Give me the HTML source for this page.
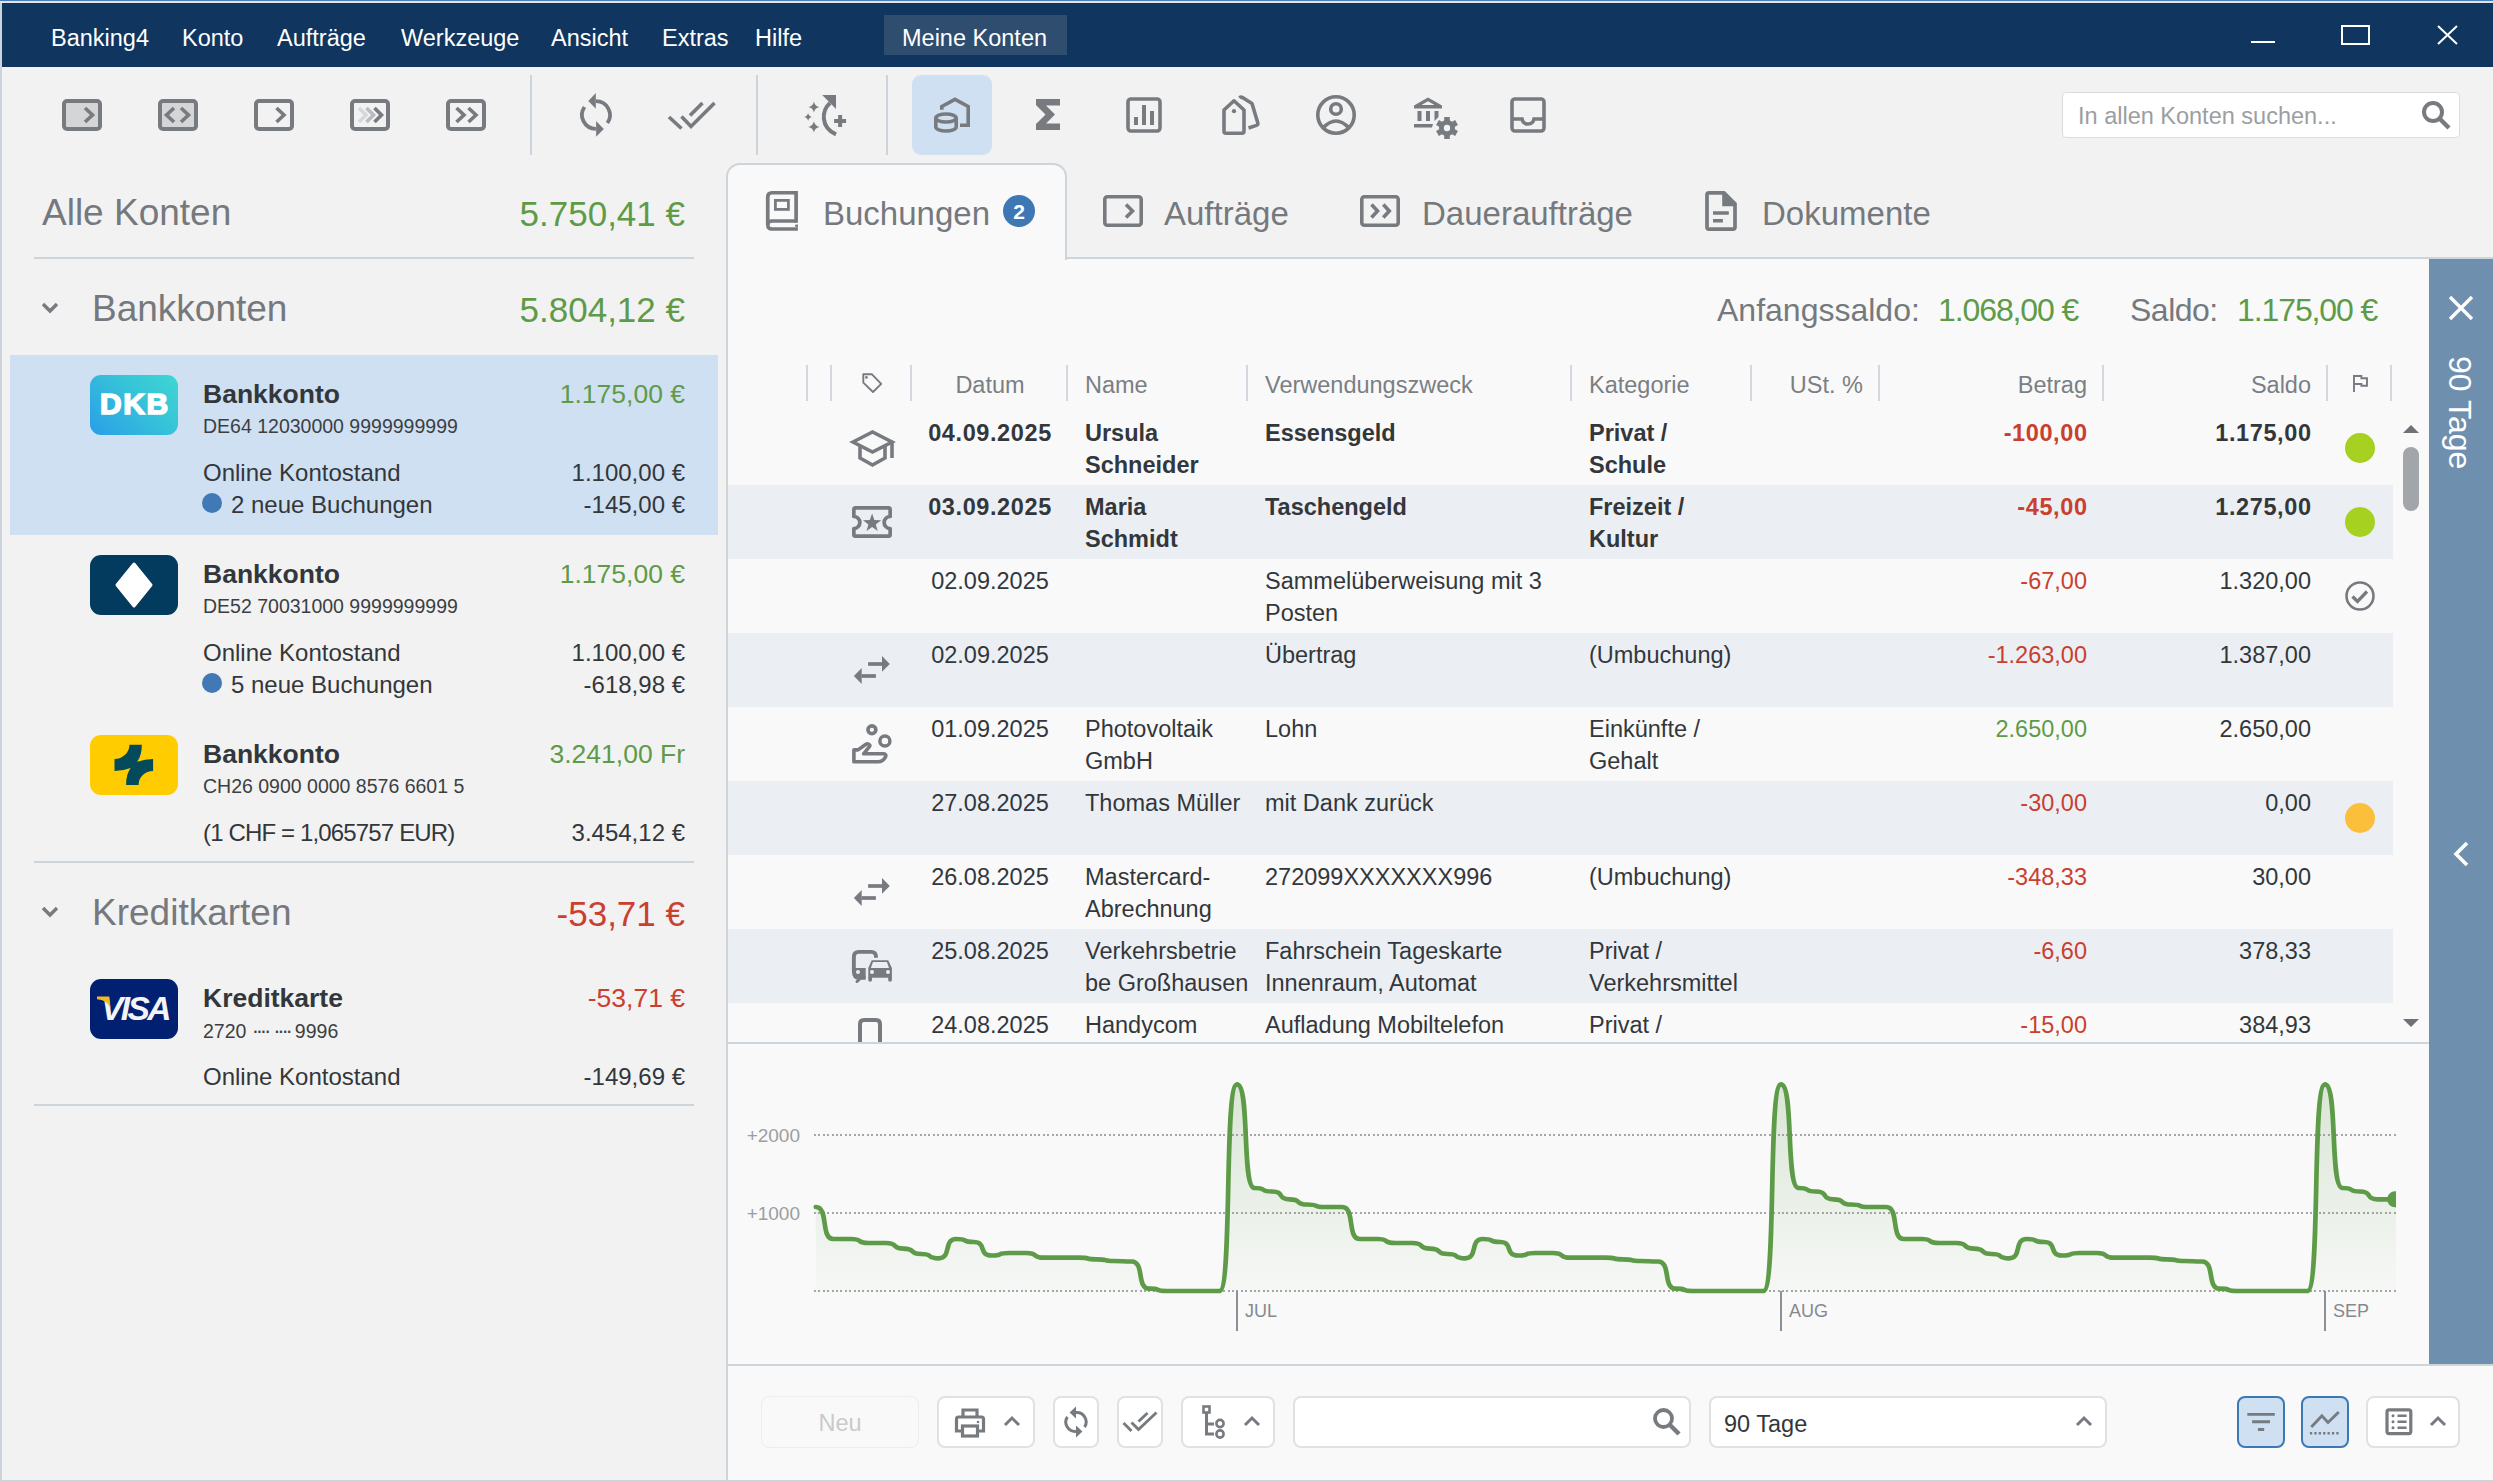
<!DOCTYPE html><html><head><meta charset="utf-8"><title>Banking4</title><style>
html,body{margin:0;padding:0;}
body{width:2494px;height:1482px;overflow:hidden;position:relative;background:#f2f2f2;font-family:"Liberation Sans", sans-serif;}
.t{position:absolute;white-space:nowrap;}
.r{position:absolute;}
.s{position:absolute;overflow:visible;}
</style></head><body>
<div class="r" style="left:0px;top:0px;width:2px;height:1482px;background:#ccd3db;"></div>
<div class="r" style="left:0px;top:0px;width:2494px;height:1px;background:#4b7bb9;"></div>
<div class="r" style="left:0px;top:1px;width:2494px;height:2px;background:#e2e3e5;"></div>
<div class="r" style="left:2493px;top:0px;width:1px;height:1482px;background:#ccd3db;"></div>
<div class="r" style="left:0px;top:1480px;width:2494px;height:2px;background:#ccd3db;"></div>
<div class="r" style="left:2px;top:3px;width:2491px;height:64px;background:#10355e;"></div>
<div class="t" style="left:51px;top:22.86px;font-size:23.5px;line-height:31px;color:#ffffff;">Banking4</div>
<div class="t" style="left:182px;top:22.86px;font-size:23.5px;line-height:31px;color:#ffffff;">Konto</div>
<div class="t" style="left:277px;top:22.86px;font-size:23.5px;line-height:31px;color:#ffffff;">Aufträge</div>
<div class="t" style="left:401px;top:22.86px;font-size:23.5px;line-height:31px;color:#ffffff;">Werkzeuge</div>
<div class="t" style="left:551px;top:22.86px;font-size:23.5px;line-height:31px;color:#ffffff;">Ansicht</div>
<div class="t" style="left:662px;top:22.86px;font-size:23.5px;line-height:31px;color:#ffffff;">Extras</div>
<div class="t" style="left:755px;top:22.86px;font-size:23.5px;line-height:31px;color:#ffffff;">Hilfe</div>
<div class="r" style="left:884px;top:15px;width:183px;height:40px;background:#2e4d6f;"></div>
<div class="t" style="left:902px;top:22.86px;font-size:23.5px;line-height:31px;color:#ffffff;">Meine Konten</div>
<div class="r" style="left:2251px;top:41px;width:24px;height:2px;background:#ffffff;"></div>
<svg class="s" style="left:2340px;top:24px;" width="31" height="22" viewBox="0 0 31 22"><rect x="2" y="2" width="27" height="18" fill="none" stroke="#fff" stroke-width="2"/></svg>
<svg class="s" style="left:2436px;top:24px;" width="23" height="22" viewBox="0 0 23 22"><path d="M2 2 L21 20 M21 2 L2 20" stroke="#fff" stroke-width="2" fill="none"/></svg>
<svg class="s" style="left:62px;top:99px;" width="40" height="32" viewBox="0 0 40 32"><rect x="2" y="2" width="36" height="28" rx="3" fill="#d4d5d7" stroke="#777b80" stroke-width="4"/><polyline points="23,9 30.5,16.0 23,23" fill="none" stroke="#777b80" stroke-width="3.6"/></svg>
<svg class="s" style="left:158px;top:99px;" width="40" height="32" viewBox="0 0 40 32"><rect x="2" y="2" width="36" height="28" rx="3" fill="#d4d5d7" stroke="#777b80" stroke-width="4"/><polyline points="16,9 8.5,16.0 16,23" fill="none" stroke="#777b80" stroke-width="3.6"/><polyline points="23,9 30.5,16.0 23,23" fill="none" stroke="#777b80" stroke-width="3.6"/></svg>
<svg class="s" style="left:254px;top:99px;" width="40" height="32" viewBox="0 0 40 32"><rect x="2" y="2" width="36" height="28" rx="3" fill="none" stroke="#777b80" stroke-width="4"/><polyline points="22.5,9 30,16.0 22.5,23" fill="none" stroke="#777b80" stroke-width="3.6"/></svg>
<svg class="s" style="left:350px;top:99px;" width="40" height="32" viewBox="0 0 40 32"><rect x="2" y="2" width="36" height="28" rx="3" fill="none" stroke="#777b80" stroke-width="4"/><polyline points="9,9 16,16.0 9,23" fill="none" stroke="#d6d7d9" stroke-width="3.6"/><polyline points="16.5,9 23.5,16.0 16.5,23" fill="none" stroke="#b9bbbe" stroke-width="3.6"/><polyline points="24.5,9 31.5,16.0 24.5,23" fill="none" stroke="#777b80" stroke-width="3.6"/></svg>
<svg class="s" style="left:446px;top:99px;" width="40" height="32" viewBox="0 0 40 32"><rect x="2" y="2" width="36" height="28" rx="3" fill="none" stroke="#777b80" stroke-width="4"/><polyline points="10.5,9 18,16.0 10.5,23" fill="none" stroke="#777b80" stroke-width="3.6"/><polyline points="22.5,9 30,16.0 22.5,23" fill="none" stroke="#777b80" stroke-width="3.6"/></svg>
<div class="r" style="left:530px;top:75px;width:2px;height:80px;background:#cdd3da;"></div>
<div class="r" style="left:756px;top:75px;width:2px;height:80px;background:#cdd3da;"></div>
<div class="r" style="left:886px;top:75px;width:2px;height:80px;background:#cdd3da;"></div>
<svg class="s" style="left:575px;top:88px;" width="45" height="54" viewBox="0 0 45 54"><path d="M20.95 13.05 A13.95 13.95 0 0 1 32.4 35" fill="none" stroke="#777b80" stroke-width="3.8"/>
<path d="M20.95 40.95 A13.95 13.95 0 0 1 9.5 19" fill="none" stroke="#777b80" stroke-width="3.8"/>
<path d="M13.3 12.9 L20.8 5.1 L20.8 20.8 Z" fill="#777b80"/><path d="M28.8 41 L21.1 33.1 L21.1 48.8 Z" fill="#777b80"/></svg>
<svg class="s" style="left:668px;top:100px;" width="50" height="32" viewBox="0 0 50 32"><path d="M1 17 L13.5 28.5 M13.5 16.5 L23 26.5 L46.5 3 M22 15.5 L34.5 3" fill="none" stroke="#777b80" stroke-width="3.6"/></svg>
<svg class="s" style="left:800px;top:92px;" width="50" height="46" viewBox="0 0 50 46"><path d="M13.9 9.4 Q14.796 14.104 19.5 15 Q14.796 15.896 13.9 20.6 Q13.004000000000001 15.896 8.3 15 Q13.004000000000001 14.104 13.9 9.4 Z" fill="#777b80"/><path d="M8.1 21.1 Q8.724 24.376 12.0 25 Q8.724 25.624 8.1 28.9 Q7.476 25.624 4.199999999999999 25 Q7.476 24.376 8.1 21.1 Z" fill="#777b80"/><path d="M13.9 29.299999999999997 Q14.796 34.004 19.5 34.9 Q14.796 35.796 13.9 40.5 Q13.004000000000001 35.796 8.3 34.9 Q13.004000000000001 34.004 13.9 29.299999999999997 Z" fill="#777b80"/><path d="M30 11 C25 15.5 23.3 21 23.9 27 C24.7 34 29.5 39.5 36 42.3" fill="none" stroke="#777b80" stroke-width="4"/><path d="M22.2 3 L36 3 L36 16.9 Z" fill="#777b80"/><path d="M34.1 28.9 L46.1 28.9 M40.1 22.9 L40.1 34.9" stroke="#777b80" stroke-width="4" fill="none"/></svg>
<div class="r" style="left:912px;top:75px;width:80px;height:80px;background:#cfe0f2;border-radius:9px;"></div>
<svg class="s" style="left:930px;top:94px;" width="44" height="42" viewBox="0 0 44 42"><path d="M11.8 15.8 L11.8 12.5 L25 5.3 L38.2 12.5 L38.2 31.2 L30 31.2" fill="none" stroke="#777b80" stroke-width="3.6"/>
<ellipse cx="16" cy="24" rx="10.2" ry="4" fill="none" stroke="#777b80" stroke-width="3.6"/>
<path d="M5.8 24 L5.8 33 A10.2 4 0 0 0 26.2 33 L26.2 24" fill="none" stroke="#777b80" stroke-width="3.6"/></svg>
<svg class="s" style="left:1034px;top:97px;" width="28" height="36" viewBox="0 0 28 36"><path d="M2 2 L26 2 L26 8.5 L12 8.5 L21 17.5 L12 26.5 L26 26.5 L26 33 L2 33 L2 27 L11.5 17.5 L2 8 Z" fill="#777b80"/></svg>
<svg class="s" style="left:1124px;top:95px;" width="40" height="40" viewBox="0 0 40 40"><rect x="4" y="4" width="32" height="32" rx="3" fill="none" stroke="#777b80" stroke-width="3.6"/><path d="M12 30 L12 22 M20 30 L20 10 M28 30 L28 16" stroke="#777b80" stroke-width="4" fill="none"/></svg>
<svg class="s" style="left:1220px;top:93px;" width="42" height="44" viewBox="0 0 42 44"><path d="M4 38.2 L4 17 L14 7.8 L24 17 L24 38.2 Q24 40.2 22 40.2 L6 40.2 Q4 40.2 4 38.2 Z" fill="none" stroke="#777b80" stroke-width="3.6" stroke-linejoin="round"/>
<circle cx="14" cy="18.2" r="2.1" fill="#777b80"/>
<path d="M19.5 5 Q20.8 3.6 22.5 4.6 L32 10.6 L37.8 30 Q38.2 31.8 36.5 32.4 L28.5 35" fill="none" stroke="#777b80" stroke-width="3.6" stroke-linejoin="round"/></svg>
<svg class="s" style="left:1314px;top:93px;" width="44" height="44" viewBox="0 0 44 44"><circle cx="22" cy="22" r="18.2" fill="none" stroke="#777b80" stroke-width="3.6"/>
<circle cx="22" cy="16" r="5.3" fill="none" stroke="#777b80" stroke-width="3.6"/>
<path d="M9 35 Q22 21 35 35" fill="none" stroke="#777b80" stroke-width="3.6"/></svg>
<svg class="s" style="left:1412px;top:95px;" width="48" height="46" viewBox="0 0 48 46"><path d="M2 10.5 L16 2.5 L30 10.5 L30 13.5 L2 13.5 Z" fill="#777b80"/><path d="M9.5 10 L16 6.3 L22.5 10 Z" fill="#f2f2f2"/>
<rect x="5.5" y="16" width="4" height="10" fill="#777b80"/><rect x="14" y="16" width="4" height="10" fill="#777b80"/><path d="M22.5 16 L26.5 16 L26.5 22 L22.5 26 Z" fill="#777b80"/>
<path d="M2 29 L21 29 L20 32.5 L2 32.5 Z" fill="#777b80"/>
<g transform="translate(35,33)"><circle r="8" fill="#777b80"/><rect x="-2.8" y="-11" width="5.6" height="6" fill="#777b80" transform="rotate(0)"/><rect x="-2.8" y="-11" width="5.6" height="6" fill="#777b80" transform="rotate(60)"/><rect x="-2.8" y="-11" width="5.6" height="6" fill="#777b80" transform="rotate(120)"/><rect x="-2.8" y="-11" width="5.6" height="6" fill="#777b80" transform="rotate(180)"/><rect x="-2.8" y="-11" width="5.6" height="6" fill="#777b80" transform="rotate(240)"/><rect x="-2.8" y="-11" width="5.6" height="6" fill="#777b80" transform="rotate(300)"/><circle r="3.2" fill="#f2f2f2"/></g></svg>
<svg class="s" style="left:1508px;top:95px;" width="40" height="40" viewBox="0 0 40 40"><rect x="4" y="4" width="32" height="32" rx="3" fill="none" stroke="#777b80" stroke-width="3.6"/>
<path d="M4 24 L14 24 Q15 29 20 29 Q25 29 26 24 L36 24" fill="none" stroke="#777b80" stroke-width="3.6"/></svg>
<div class="r" style="left:2062px;top:92px;width:398px;height:46px;background:#ffffff;box-sizing:border-box;border:1px solid #dcdcdc;border-radius:4px;"></div>
<div class="t" style="left:2078px;top:101.36px;font-size:23.5px;line-height:31px;color:#9b9ea2;">In allen Konten suchen...</div>
<svg class="s" style="left:2420px;top:99px;" width="34" height="34" viewBox="0 0 34 34"><circle cx="13" cy="13" r="9" fill="none" stroke="#777b80" stroke-width="4"/><path d="M19.5 19.5 L29 29" stroke="#777b80" stroke-width="4.5" stroke-linecap="butt"/></svg>
<div class="t" style="left:42px;top:189.18px;font-size:37px;line-height:48px;color:#75797e;">Alle Konten</div>
<div class="t" style="left:-515px;width:1200px;text-align:right;top:190.87px;font-size:35px;line-height:46px;color:#5e9b48;">5.750,41 €</div>
<div class="r" style="left:34px;top:257px;width:660px;height:2px;background:#cdd4da;"></div>
<svg class="s" style="left:41px;top:302px;" width="18" height="12" viewBox="0 0 18 12"><polyline points="2,2 9,9 16,2" fill="none" stroke="#777b80" stroke-width="3.4"/></svg>
<div class="t" style="left:92px;top:285.18px;font-size:37px;line-height:48px;color:#75797e;">Bankkonten</div>
<div class="t" style="left:-515px;width:1200px;text-align:right;top:286.87px;font-size:35px;line-height:46px;color:#5e9b48;">5.804,12 €</div>
<div class="r" style="left:10px;top:355px;width:708px;height:180px;background:#cfe0f2;"></div>
<div class="r" style="left:90px;top:375px;width:88px;height:60px;border-radius:11px;overflow:hidden;background:linear-gradient(45deg,#2b9ee8 0%,#36c4d8 60%,#3fd6d2 100%);"><div class="t" style="left:1px;top:11px;width:88px;text-align:center;font-size:30px;line-height:36px;font-weight:700;color:#fff;letter-spacing:1.6px;-webkit-text-stroke:1.6px #fff;">DKB</div></div>
<div class="t" style="left:203px;top:376.82px;font-size:26.5px;line-height:34px;color:#33373b;font-weight:700;">Bankkonto</div>
<div class="t" style="left:-515px;width:1200px;text-align:right;top:376.82px;font-size:26.5px;line-height:34px;color:#5e9b48;">1.175,00 €</div>
<div class="t" style="left:203px;top:413.74px;font-size:19.5px;line-height:25px;color:#3b3f43;">DE64 12030000 9999999999</div>
<div class="t" style="left:203px;top:457.18px;font-size:24px;line-height:31px;color:#33373b;">Online Kontostand</div>
<div class="t" style="left:-515px;width:1200px;text-align:right;top:457.18px;font-size:24px;line-height:31px;color:#33373b;">1.100,00 €</div>
<div class="r" style="left:202px;top:493px;width:20px;height:20px;border-radius:50%;background:#4178b6;"></div>
<div class="t" style="left:231px;top:489.18px;font-size:24px;line-height:31px;color:#33373b;">2 neue Buchungen</div>
<div class="t" style="left:-515px;width:1200px;text-align:right;top:489.18px;font-size:24px;line-height:31px;color:#33373b;">-145,00 €</div>
<div class="r" style="left:90px;top:555px;width:88px;height:60px;border-radius:11px;overflow:hidden;background:#023b5d;"><svg class="s" style="left:0;top:0" width="88" height="60"><path d="M44 9 L61 30 L44 51 L27 30 Z" fill="#fff" stroke="#fff" stroke-width="3" stroke-linejoin="round"/></svg></div>
<div class="t" style="left:203px;top:556.82px;font-size:26.5px;line-height:34px;color:#33373b;font-weight:700;">Bankkonto</div>
<div class="t" style="left:-515px;width:1200px;text-align:right;top:556.82px;font-size:26.5px;line-height:34px;color:#5e9b48;">1.175,00 €</div>
<div class="t" style="left:203px;top:593.74px;font-size:19.5px;line-height:25px;color:#3b3f43;">DE52 70031000 9999999999</div>
<div class="t" style="left:203px;top:637.18px;font-size:24px;line-height:31px;color:#33373b;">Online Kontostand</div>
<div class="t" style="left:-515px;width:1200px;text-align:right;top:637.18px;font-size:24px;line-height:31px;color:#33373b;">1.100,00 €</div>
<div class="r" style="left:202px;top:673px;width:20px;height:20px;border-radius:50%;background:#4178b6;"></div>
<div class="t" style="left:231px;top:669.18px;font-size:24px;line-height:31px;color:#33373b;">5 neue Buchungen</div>
<div class="t" style="left:-515px;width:1200px;text-align:right;top:669.18px;font-size:24px;line-height:31px;color:#33373b;">-618,98 €</div>
<div class="r" style="left:90px;top:735px;width:88px;height:60px;border-radius:11px;overflow:hidden;background:#ffcc00;"><svg class="s" style="left:0;top:0" width="88" height="60"><path d="M39.4 9.7 L51.8 9.7 Q52 20 47.2 26.7 Q55 24 63.1 24 L63.1 35.9 A14.5 14 0 0 0 48.6 49.9 L36.1 49.9 Q36 39 40.7 32.9 Q33 35.9 24.5 35.9 L24.5 24 A14.9 14.3 0 0 0 39.4 9.7 Z" fill="#034b5b"/></svg></div>
<div class="t" style="left:203px;top:736.82px;font-size:26.5px;line-height:34px;color:#33373b;font-weight:700;">Bankkonto</div>
<div class="t" style="left:-515px;width:1200px;text-align:right;top:736.82px;font-size:26.5px;line-height:34px;color:#5e9b48;">3.241,00 Fr</div>
<div class="t" style="left:203px;top:773.74px;font-size:19.5px;line-height:25px;color:#3b3f43;">CH26 0900 0000 8576 6601 5</div>
<div class="t" style="left:203px;top:817.18px;font-size:24px;line-height:31px;color:#33373b;"><span style="letter-spacing:-0.85px">(1 CHF = 1,065757 EUR)</span></div>
<div class="t" style="left:-515px;width:1200px;text-align:right;top:817.18px;font-size:24px;line-height:31px;color:#33373b;">3.454,12 €</div>
<div class="r" style="left:34px;top:861px;width:660px;height:2px;background:#cdd4da;"></div>
<svg class="s" style="left:41px;top:906px;" width="18" height="12" viewBox="0 0 18 12"><polyline points="2,2 9,9 16,2" fill="none" stroke="#777b80" stroke-width="3.4"/></svg>
<div class="t" style="left:92px;top:889.18px;font-size:37px;line-height:48px;color:#75797e;">Kreditkarten</div>
<div class="t" style="left:-515px;width:1200px;text-align:right;top:890.87px;font-size:35px;line-height:46px;color:#c9402f;">-53,71 €</div>
<div class="r" style="left:90px;top:979px;width:88px;height:60px;border-radius:11px;overflow:hidden;background:#012072;"><div class="t" style="left:11px;top:9.8px;font-size:33.5px;line-height:40px;font-weight:700;font-style:italic;color:#f4f4f6;letter-spacing:-2.6px;">VISA</div><svg class="s" style="left:0;top:0" width="88" height="60"><path d="M7 17.5 L19.2 17.5 L20.5 29 Q17 21 7 20.3 Z" fill="#f2b81f"/></svg></div>
<div class="t" style="left:203px;top:980.82px;font-size:26.5px;line-height:34px;color:#33373b;font-weight:700;">Kreditkarte</div>
<div class="t" style="left:-515px;width:1200px;text-align:right;top:980.82px;font-size:26.5px;line-height:34px;color:#c9402f;">-53,71 €</div>
<div class="t" style="left:203px;top:1017.74px;font-size:19.5px;line-height:25px;color:#3b3f43;">2720 <span style="letter-spacing:-3.3px;font-size:22px">····</span>  <span style="letter-spacing:-3.3px;font-size:22px">····</span>  9996</div>
<div class="t" style="left:203px;top:1061.18px;font-size:24px;line-height:31px;color:#33373b;">Online Kontostand</div>
<div class="t" style="left:-515px;width:1200px;text-align:right;top:1061.18px;font-size:24px;line-height:31px;color:#33373b;">-149,69 €</div>
<div class="r" style="left:34px;top:1104px;width:660px;height:2px;background:#cdd4da;"></div>
<div class="r" style="left:728px;top:259px;width:1765px;height:1221px;background:#f9f9f9;"></div>
<div class="r" style="left:726px;top:178px;width:2px;height:1302px;background:#cdd4da;"></div>
<div class="r" style="left:726px;top:163px;width:341px;height:97px;box-sizing:border-box;border:2px solid #cdd4da;border-bottom:none;border-radius:14px 14px 0 0;background:#f9f9f9;"></div>
<div class="r" style="left:1066px;top:257px;width:1427px;height:2px;background:#cdd4da;"></div>
<div class="r" style="left:728px;top:259px;width:337px;height:3px;background:#f9f9f9;"></div>
<svg class="s" style="left:764px;top:189px;" width="36" height="44" viewBox="0 0 36 44"><path d="M3.75 36 L3.75 8 Q3.75 3.75 8 3.75 L32.1 3.75 L32.1 33.8" fill="none" stroke="#777b80" stroke-width="3.7"/>
<path d="M32.1 31.9 L8 31.9 Q3.75 31.9 3.75 35.9 Q3.75 39.9 8 39.9 L33.9 39.9" fill="none" stroke="#777b80" stroke-width="3.5"/>
<path d="M33.9 33.5 L33.9 35.2 Q30.8 35.6 30.8 36.8 Q30.8 38 33.9 38.3 L33.9 38 Z" fill="#777b80"/>
<rect x="11.4" y="11.4" width="13" height="9" fill="none" stroke="#777b80" stroke-width="2.8"/></svg>
<div class="t" style="left:823px;top:192.07px;font-size:33px;line-height:43px;color:#75797e;">Buchungen</div>
<div class="r" style="left:1003px;top:195px;width:32px;height:32px;border-radius:50%;background:#3d78b5;"></div>
<div class="t" style="left:419px;width:1200px;text-align:center;top:198.22px;font-size:21px;line-height:27px;color:#ffffff;font-weight:700;">2</div>
<svg class="s" style="left:1101px;top:193px;" width="44" height="36" viewBox="0 0 44 36"><rect x="3.8" y="3.8" width="36.4" height="28.4" rx="2.5" fill="none" stroke="#777b80" stroke-width="3.6"/><polyline points="25,11.5 31.5,18 25,24.5" fill="none" stroke="#777b80" stroke-width="3.6"/></svg>
<div class="t" style="left:1164px;top:192.07px;font-size:33px;line-height:43px;color:#75797e;">Aufträge</div>
<svg class="s" style="left:1358px;top:193px;" width="44" height="36" viewBox="0 0 44 36"><rect x="3.8" y="3.8" width="36.4" height="28.4" rx="2.5" fill="none" stroke="#777b80" stroke-width="3.6"/><polyline points="13.5,11.5 19.5,18 13.5,24.5" fill="none" stroke="#777b80" stroke-width="3.6"/><polyline points="25.3,11.5 31.3,18 25.3,24.5" fill="none" stroke="#777b80" stroke-width="3.6"/></svg>
<div class="t" style="left:1422px;top:192.07px;font-size:33px;line-height:43px;color:#75797e;">Daueraufträge</div>
<svg class="s" style="left:1703px;top:189px;" width="36" height="44" viewBox="0 0 36 44"><path d="M4 5.5 Q4 3.8 6 3.8 L21 3.8 L32 14.8 L32 38 Q32 40.2 30 40.2 L6 40.2 Q4 40.2 4 38 Z" fill="none" stroke="#777b80" stroke-width="3.7" stroke-linejoin="round"/>
<path d="M19.2 3.8 L22 3.8 L32.5 14.5 L32.5 17.3 L19.2 17.3 Z" fill="#777b80"/>
<path d="M10 24 L25.8 24 M10 31.8 L19.9 31.8" stroke="#777b80" stroke-width="3.6"/></svg>
<div class="t" style="left:1762px;top:192.07px;font-size:33px;line-height:43px;color:#75797e;">Dokumente</div>
<div class="t" style="left:1717px;top:288.91px;font-size:32px;line-height:42px;color:#75797e;">Anfangssaldo:</div>
<div class="t" style="left:1938px;top:288.91px;font-size:32px;line-height:42px;color:#5e9b48;letter-spacing:-1.1px;">1.068,00 €</div>
<div class="t" style="left:2130px;top:288.91px;font-size:32px;line-height:42px;color:#75797e;letter-spacing:-0.5px;">Saldo:</div>
<div class="t" style="left:2237px;top:288.91px;font-size:32px;line-height:42px;color:#5e9b48;letter-spacing:-1.1px;">1.175,00 €</div>
<div class="r" style="left:806px;top:365px;width:2px;height:36px;background:#d3d8de;"></div>
<div class="r" style="left:830px;top:365px;width:2px;height:36px;background:#d3d8de;"></div>
<div class="r" style="left:910px;top:365px;width:2px;height:36px;background:#d3d8de;"></div>
<div class="r" style="left:1066px;top:365px;width:2px;height:36px;background:#d3d8de;"></div>
<div class="r" style="left:1246px;top:365px;width:2px;height:36px;background:#d3d8de;"></div>
<div class="r" style="left:1570px;top:365px;width:2px;height:36px;background:#d3d8de;"></div>
<div class="r" style="left:1750px;top:365px;width:2px;height:36px;background:#d3d8de;"></div>
<div class="r" style="left:1878px;top:365px;width:2px;height:36px;background:#d3d8de;"></div>
<div class="r" style="left:2102px;top:365px;width:2px;height:36px;background:#d3d8de;"></div>
<div class="r" style="left:2326px;top:365px;width:2px;height:36px;background:#d3d8de;"></div>
<div class="r" style="left:2390px;top:365px;width:2px;height:36px;background:#d3d8de;"></div>
<svg class="s" style="left:859px;top:371px;" width="26" height="24" viewBox="0 0 26 24"><path d="M4.3 3.3 L13 3.3 L22.2 12.9 L14 21 L4.3 11.6 Z" fill="none" stroke="#777b80" stroke-width="1.9" stroke-linejoin="round"/><circle cx="7.4" cy="6.4" r="1.35" fill="#777b80"/></svg>
<div class="t" style="left:390px;width:1200px;text-align:center;top:370.36px;font-size:23.5px;line-height:31px;color:#7a7f85;">Datum</div>
<div class="t" style="left:1085px;top:370.36px;font-size:23.5px;line-height:31px;color:#7a7f85;">Name</div>
<div class="t" style="left:1265px;top:370.36px;font-size:23.5px;line-height:31px;color:#7a7f85;">Verwendungszweck</div>
<div class="t" style="left:1589px;top:370.36px;font-size:23.5px;line-height:31px;color:#7a7f85;">Kategorie</div>
<div class="t" style="left:663px;width:1200px;text-align:right;top:370.36px;font-size:23.5px;line-height:31px;color:#7a7f85;">USt. %</div>
<div class="t" style="left:887px;width:1200px;text-align:right;top:370.36px;font-size:23.5px;line-height:31px;color:#7a7f85;">Betrag</div>
<div class="t" style="left:1111px;width:1200px;text-align:right;top:370.36px;font-size:23.5px;line-height:31px;color:#7a7f85;">Saldo</div>
<svg class="s" style="left:2350px;top:373px;" width="22" height="22" viewBox="0 0 22 22"><path d="M4 19 L4 3 L11.4 3 L11.4 5.2 L17 5.2 L17 12.8 L11.4 12.8 L11.4 11 L4 11" fill="none" stroke="#777b80" stroke-width="1.9"/></svg>
<svg class="s" style="left:851px;top:430px;" width="44" height="38" viewBox="0 0 44 38"><path d="M2 12 L21.5 2 L41 12 L21.5 22 Z" fill="none" stroke="#777b80" stroke-width="3.6" stroke-linejoin="miter"/><path d="M9 16 L9 28 L21.5 35 L34 28 L34 16" fill="none" stroke="#777b80" stroke-width="3.6"/><path d="M41 12 L41 28" stroke="#777b80" stroke-width="3.6"/></svg>
<div class="t" style="left:390px;width:1200px;text-align:center;top:418.36px;font-size:23.5px;line-height:31px;color:#33373b;font-weight:700;letter-spacing:0.6px;">04.09.2025</div>
<div class="t" style="left:1085px;top:418.36px;font-size:23.5px;line-height:31px;color:#33373b;font-weight:700;">Ursula</div>
<div class="t" style="left:1085px;top:450.36px;font-size:23.5px;line-height:31px;color:#33373b;font-weight:700;">Schneider</div>
<div class="t" style="left:1265px;top:418.36px;font-size:23.5px;line-height:31px;color:#33373b;font-weight:700;">Essensgeld</div>
<div class="t" style="left:1589px;top:418.36px;font-size:23.5px;line-height:31px;color:#33373b;font-weight:700;">Privat /</div>
<div class="t" style="left:1589px;top:450.36px;font-size:23.5px;line-height:31px;color:#33373b;font-weight:700;">Schule</div>
<div class="t" style="left:887.5999999999999px;width:1200px;text-align:right;top:418.36px;font-size:23.5px;line-height:31px;color:#c9402f;font-weight:700;letter-spacing:0.6px;">-100,00</div>
<div class="t" style="left:1111.6px;width:1200px;text-align:right;top:418.36px;font-size:23.5px;line-height:31px;color:#33373b;font-weight:700;letter-spacing:0.6px;">1.175,00</div>
<div class="r" style="left:2345px;top:433px;width:30px;height:30px;border-radius:50%;background:#a6d121;"></div>
<div class="r" style="left:728px;top:485px;width:1665px;height:74px;background:#ebeff4;"></div>
<svg class="s" style="left:851px;top:505px;" width="42" height="34" viewBox="0 0 42 34"><path d="M2.85 4.5 Q2.85 2.85 4.5 2.85 L37.5 2.85 Q39.15 2.85 39.15 4.5 L39.15 11.5 A6 6 0 0 0 39.15 23.5 L39.15 29.5 Q39.15 31.15 37.5 31.15 L4.5 31.15 Q2.85 31.15 2.85 29.5 L2.85 23.5 A6 6 0 0 0 2.85 11.5 Z" fill="none" stroke="#777b80" stroke-width="3.7" stroke-linejoin="round"/><path d="M21.10 8.60 L23.36 15.09 L30.23 15.23 L24.75 19.39 L26.74 25.97 L21.10 22.04 L15.46 25.97 L17.45 19.39 L11.97 15.23 L18.84 15.09 Z" fill="#777b80"/></svg>
<div class="t" style="left:390px;width:1200px;text-align:center;top:492.36px;font-size:23.5px;line-height:31px;color:#33373b;font-weight:700;letter-spacing:0.6px;">03.09.2025</div>
<div class="t" style="left:1085px;top:492.36px;font-size:23.5px;line-height:31px;color:#33373b;font-weight:700;">Maria</div>
<div class="t" style="left:1085px;top:524.36px;font-size:23.5px;line-height:31px;color:#33373b;font-weight:700;">Schmidt</div>
<div class="t" style="left:1265px;top:492.36px;font-size:23.5px;line-height:31px;color:#33373b;font-weight:700;">Taschengeld</div>
<div class="t" style="left:1589px;top:492.36px;font-size:23.5px;line-height:31px;color:#33373b;font-weight:700;">Freizeit /</div>
<div class="t" style="left:1589px;top:524.36px;font-size:23.5px;line-height:31px;color:#33373b;font-weight:700;">Kultur</div>
<div class="t" style="left:887.5999999999999px;width:1200px;text-align:right;top:492.36px;font-size:23.5px;line-height:31px;color:#c9402f;font-weight:700;letter-spacing:0.6px;">-45,00</div>
<div class="t" style="left:1111.6px;width:1200px;text-align:right;top:492.36px;font-size:23.5px;line-height:31px;color:#33373b;font-weight:700;letter-spacing:0.6px;">1.275,00</div>
<div class="r" style="left:2345px;top:507px;width:30px;height:30px;border-radius:50%;background:#a6d121;"></div>
<div class="t" style="left:390px;width:1200px;text-align:center;top:566.36px;font-size:23.5px;line-height:31px;color:#33373b;">02.09.2025</div>
<div class="t" style="left:1265px;top:566.36px;font-size:23.5px;line-height:31px;color:#33373b;">Sammelüberweisung mit 3</div>
<div class="t" style="left:1265px;top:598.36px;font-size:23.5px;line-height:31px;color:#33373b;">Posten</div>
<div class="t" style="left:887px;width:1200px;text-align:right;top:566.36px;font-size:23.5px;line-height:31px;color:#c9402f;">-67,00</div>
<div class="t" style="left:1111px;width:1200px;text-align:right;top:566.36px;font-size:23.5px;line-height:31px;color:#33373b;">1.320,00</div>
<svg class="s" style="left:2343px;top:579px;" width="34" height="34" viewBox="0 0 34 34"><circle cx="17" cy="17" r="13.5" fill="none" stroke="#777b80" stroke-width="2.6"/><polyline points="9.5,17.5 14.5,22.5 24,12.5" fill="none" stroke="#777b80" stroke-width="3.3"/></svg>
<div class="r" style="left:728px;top:633px;width:1665px;height:74px;background:#ebeff4;"></div>
<svg class="s" style="left:853px;top:654px;" width="40" height="32" viewBox="0 0 40 32"><path d="M15.1 10 L29.5 10" stroke="#777b80" stroke-width="3.7"/><path d="M29 1.9 L36.8 10 L29 17.8 Z" fill="#777b80"/><path d="M8.5 22 L22.9 22" stroke="#777b80" stroke-width="3.7"/><path d="M0.9 22 L8.7 13.9 L8.7 29.9 Z" fill="#777b80"/></svg>
<div class="t" style="left:390px;width:1200px;text-align:center;top:640.36px;font-size:23.5px;line-height:31px;color:#33373b;">02.09.2025</div>
<div class="t" style="left:1265px;top:640.36px;font-size:23.5px;line-height:31px;color:#33373b;">Übertrag</div>
<div class="t" style="left:1589px;top:640.36px;font-size:23.5px;line-height:31px;color:#33373b;">(Umbuchung)</div>
<div class="t" style="left:887px;width:1200px;text-align:right;top:640.36px;font-size:23.5px;line-height:31px;color:#c9402f;">-1.263,00</div>
<div class="t" style="left:1111px;width:1200px;text-align:right;top:640.36px;font-size:23.5px;line-height:31px;color:#33373b;">1.387,00</div>
<svg class="s" style="left:845px;top:715px;" width="50" height="50" viewBox="0 0 50 50"><circle cx="26.9" cy="14.8" r="3.95" fill="none" stroke="#777b80" stroke-width="3.6"/><circle cx="39.9" cy="26" r="5" fill="none" stroke="#777b80" stroke-width="3.5"/><path d="M8.9 46.8 L8.9 34.9 L13 34.9 L21 29.2 Q22.3 28.3 23.6 29.2 L24.3 29.7 Q25.2 30.4 24.6 31.4 L18.6 38.8 L39 38.8 Q41.6 39.2 40.6 41.8 Q38.2 46.8 33 46.8 Z" fill="none" stroke="#777b80" stroke-width="3.6" stroke-linejoin="round"/></svg>
<div class="t" style="left:390px;width:1200px;text-align:center;top:714.36px;font-size:23.5px;line-height:31px;color:#33373b;">01.09.2025</div>
<div class="t" style="left:1085px;top:714.36px;font-size:23.5px;line-height:31px;color:#33373b;">Photovoltaik</div>
<div class="t" style="left:1085px;top:746.36px;font-size:23.5px;line-height:31px;color:#33373b;">GmbH</div>
<div class="t" style="left:1265px;top:714.36px;font-size:23.5px;line-height:31px;color:#33373b;">Lohn</div>
<div class="t" style="left:1589px;top:714.36px;font-size:23.5px;line-height:31px;color:#33373b;">Einkünfte /</div>
<div class="t" style="left:1589px;top:746.36px;font-size:23.5px;line-height:31px;color:#33373b;">Gehalt</div>
<div class="t" style="left:887px;width:1200px;text-align:right;top:714.36px;font-size:23.5px;line-height:31px;color:#5e9b48;">2.650,00</div>
<div class="t" style="left:1111px;width:1200px;text-align:right;top:714.36px;font-size:23.5px;line-height:31px;color:#33373b;">2.650,00</div>
<div class="r" style="left:728px;top:781px;width:1665px;height:74px;background:#ebeff4;"></div>
<div class="t" style="left:390px;width:1200px;text-align:center;top:788.36px;font-size:23.5px;line-height:31px;color:#33373b;">27.08.2025</div>
<div class="t" style="left:1085px;top:788.36px;font-size:23.5px;line-height:31px;color:#33373b;">Thomas Müller</div>
<div class="t" style="left:1265px;top:788.36px;font-size:23.5px;line-height:31px;color:#33373b;">mit Dank zurück</div>
<div class="t" style="left:887px;width:1200px;text-align:right;top:788.36px;font-size:23.5px;line-height:31px;color:#c9402f;">-30,00</div>
<div class="t" style="left:1111px;width:1200px;text-align:right;top:788.36px;font-size:23.5px;line-height:31px;color:#33373b;">0,00</div>
<div class="r" style="left:2345px;top:803px;width:30px;height:30px;border-radius:50%;background:#fbbf3b;"></div>
<svg class="s" style="left:853px;top:876px;" width="40" height="32" viewBox="0 0 40 32"><path d="M15.1 10 L29.5 10" stroke="#777b80" stroke-width="3.7"/><path d="M29 1.9 L36.8 10 L29 17.8 Z" fill="#777b80"/><path d="M8.5 22 L22.9 22" stroke="#777b80" stroke-width="3.7"/><path d="M0.9 22 L8.7 13.9 L8.7 29.9 Z" fill="#777b80"/></svg>
<div class="t" style="left:390px;width:1200px;text-align:center;top:862.36px;font-size:23.5px;line-height:31px;color:#33373b;">26.08.2025</div>
<div class="t" style="left:1085px;top:862.36px;font-size:23.5px;line-height:31px;color:#33373b;">Mastercard-</div>
<div class="t" style="left:1085px;top:894.36px;font-size:23.5px;line-height:31px;color:#33373b;">Abrechnung</div>
<div class="t" style="left:1265px;top:862.36px;font-size:23.5px;line-height:31px;color:#33373b;">272099XXXXXXX996</div>
<div class="t" style="left:1589px;top:862.36px;font-size:23.5px;line-height:31px;color:#33373b;">(Umbuchung)</div>
<div class="t" style="left:887px;width:1200px;text-align:right;top:862.36px;font-size:23.5px;line-height:31px;color:#c9402f;">-348,33</div>
<div class="t" style="left:1111px;width:1200px;text-align:right;top:862.36px;font-size:23.5px;line-height:31px;color:#33373b;">30,00</div>
<div class="r" style="left:728px;top:929px;width:1665px;height:74px;background:#ebeff4;"></div>
<svg class="s" style="left:845px;top:940px;" width="50" height="46" viewBox="0 0 50 46"><path d="M20.7 37.8 L14 37.8 Q8.85 37.8 8.85 31 L8.85 17 Q8.85 11.9 14 11.9 L26 11.9 Q31 11.9 31 17 L31 17.7" fill="none" stroke="#777b80" stroke-width="3.9"/><path d="M9.8 28 L20.7 28 L20.7 37.8 L9.8 37.8 Z" fill="#777b80"/><circle cx="13" cy="31.9" r="2" fill="#ebeff4"/><path d="M16.2 37.5 L12 41.5" stroke="#777b80" stroke-width="3" stroke-linecap="round"/><path d="M23.3 28 L26.7 20.2 L43.2 20.2 L46.9 28 L46.9 37.8 L23.3 37.8 Z" fill="#777b80"/><path d="M28 21.9 L41.9 21.9 L44 28 L25.8 28 Z" fill="#ebeff4"/><circle cx="27" cy="31.9" r="2" fill="#ebeff4"/><circle cx="43" cy="31.9" r="2" fill="#ebeff4"/><path d="M23.3 37 L23.3 40 Q23.3 41.8 25.1 41.8 Q27 41.8 27 40 L27 37 Z M43.2 37 L43.2 40 Q43.2 41.8 45 41.8 Q46.9 41.8 46.9 40 L46.9 37 Z" fill="#777b80"/></svg>
<div class="t" style="left:390px;width:1200px;text-align:center;top:936.36px;font-size:23.5px;line-height:31px;color:#33373b;">25.08.2025</div>
<div class="t" style="left:1085px;top:936.36px;font-size:23.5px;line-height:31px;color:#33373b;">Verkehrsbetrie</div>
<div class="t" style="left:1085px;top:968.36px;font-size:23.5px;line-height:31px;color:#33373b;">be Großhausen</div>
<div class="t" style="left:1265px;top:936.36px;font-size:23.5px;line-height:31px;color:#33373b;">Fahrschein Tageskarte</div>
<div class="t" style="left:1265px;top:968.36px;font-size:23.5px;line-height:31px;color:#33373b;">Innenraum, Automat</div>
<div class="t" style="left:1589px;top:936.36px;font-size:23.5px;line-height:31px;color:#33373b;">Privat /</div>
<div class="t" style="left:1589px;top:968.36px;font-size:23.5px;line-height:31px;color:#33373b;">Verkehrsmittel</div>
<div class="t" style="left:887px;width:1200px;text-align:right;top:936.36px;font-size:23.5px;line-height:31px;color:#c9402f;">-6,60</div>
<div class="t" style="left:1111px;width:1200px;text-align:right;top:936.36px;font-size:23.5px;line-height:31px;color:#33373b;">378,33</div>
<svg class="s" style="left:856px;top:1017px;" width="28" height="34" viewBox="0 0 28 34"><path d="M4 30 L4 7 Q4 3 8 3 L20 3 Q24 3 24 7 L24 30" fill="none" stroke="#777b80" stroke-width="4"/></svg>
<div class="t" style="left:390px;width:1200px;text-align:center;top:1010.36px;font-size:23.5px;line-height:31px;color:#33373b;">24.08.2025</div>
<div class="t" style="left:1085px;top:1010.36px;font-size:23.5px;line-height:31px;color:#33373b;">Handycom</div>
<div class="t" style="left:1265px;top:1010.36px;font-size:23.5px;line-height:31px;color:#33373b;">Aufladung Mobiltelefon</div>
<div class="t" style="left:1589px;top:1010.36px;font-size:23.5px;line-height:31px;color:#33373b;">Privat /</div>
<div class="t" style="left:887px;width:1200px;text-align:right;top:1010.36px;font-size:23.5px;line-height:31px;color:#c9402f;">-15,00</div>
<div class="t" style="left:1111px;width:1200px;text-align:right;top:1010.36px;font-size:23.5px;line-height:31px;color:#33373b;">384,93</div>
<svg class="s" style="left:2401px;top:422px;" width="20" height="13" viewBox="0 0 20 13"><path d="M2 11 L10 3 L18 11 Z" fill="#6e7277"/></svg>
<div class="r" style="left:2403px;top:447px;width:16px;height:64px;background:#a2a6ab;border-radius:8px;"></div>
<svg class="s" style="left:2401px;top:1017px;" width="20" height="13" viewBox="0 0 20 13"><path d="M2 2 L10 10 L18 2 Z" fill="#6e7277"/></svg>
<div class="r" style="left:728px;top:1042px;width:1701px;height:322px;background:#f9f9f9;"></div>
<div class="r" style="left:728px;top:1042px;width:1701px;height:2px;background:#cdd4da;"></div>
<div class="r" style="left:814px;top:1134px;width:1582px;height:2px;background:repeating-linear-gradient(90deg,#a3a7ab 0 2px,transparent 2px 4.4px);"></div>
<div class="r" style="left:814px;top:1212px;width:1582px;height:2px;background:repeating-linear-gradient(90deg,#a3a7ab 0 2px,transparent 2px 4.4px);"></div>
<div class="r" style="left:814px;top:1290px;width:1582px;height:2px;background:repeating-linear-gradient(90deg,#a3a7ab 0 2px,transparent 2px 4.4px);"></div>
<div class="t" style="left:-400px;width:1200px;text-align:right;top:1122.92px;font-size:19px;line-height:25px;color:#9a9ea3;">+2000</div>
<div class="t" style="left:-400px;width:1200px;text-align:right;top:1200.92px;font-size:19px;line-height:25px;color:#9a9ea3;">+1000</div>
<div class="r" style="left:1236px;top:1291px;width:2px;height:40px;background:#8d9196;"></div>
<div class="t" style="left:1245px;top:1300.26px;font-size:18px;line-height:23px;color:#85898e;">JUL</div>
<div class="r" style="left:1780px;top:1291px;width:2px;height:40px;background:#8d9196;"></div>
<div class="t" style="left:1789px;top:1300.26px;font-size:18px;line-height:23px;color:#85898e;">AUG</div>
<div class="r" style="left:2324px;top:1291px;width:2px;height:40px;background:#8d9196;"></div>
<div class="t" style="left:2333px;top:1300.26px;font-size:18px;line-height:23px;color:#85898e;">SEP</div>
<svg class="s" style="left:0;top:0;overflow:hidden" width="2494" height="1482" viewBox="0 0 2494 1482">
<defs><linearGradient id="gf" x1="0" y1="1084" x2="0" y2="1291" gradientUnits="userSpaceOnUse"><stop offset="0" stop-color="#5e9b48" stop-opacity="0.2"/><stop offset="1" stop-color="#5e9b48" stop-opacity="0.02"/></linearGradient>
<clipPath id="cc"><rect x="810" y="1060" width="1586" height="300"/></clipPath></defs>
<g clip-path="url(#cc)"><path d="M815.8 1207.0 C829.0 1207.0 820.2 1239.0 833.4 1239.0 C846.6 1239.0 837.8 1239.0 850.9 1239.0 C864.1 1239.0 855.3 1243.0 868.5 1243.0 C881.7 1243.0 872.9 1243.0 886.0 1243.0 C899.2 1243.0 890.4 1248.6 903.6 1248.6 C916.7 1248.6 908.0 1254.0 921.1 1254.0 C934.3 1254.0 925.5 1258.3 938.7 1258.3 C951.8 1258.3 943.1 1239.0 956.2 1239.0 C969.4 1239.0 960.6 1242.0 973.8 1242.0 C986.9 1242.0 978.2 1255.5 991.3 1255.5 C1004.5 1255.5 995.7 1253.0 1008.9 1253.0 C1022.0 1253.0 1013.3 1253.0 1026.4 1253.0 C1039.6 1253.0 1030.8 1257.7 1044.0 1257.7 C1057.1 1257.7 1048.4 1257.7 1061.5 1257.7 C1074.7 1257.7 1065.9 1257.7 1079.1 1257.7 C1092.2 1257.7 1083.5 1259.3 1096.6 1259.3 C1109.8 1259.3 1101.0 1261.0 1114.2 1261.0 C1127.3 1261.0 1118.6 1261.5 1131.7 1261.5 C1144.9 1261.5 1136.1 1288.7 1149.3 1288.7 C1162.4 1288.7 1153.6 1291.0 1166.8 1291.0 C1180.0 1291.0 1171.2 1291.0 1184.4 1291.0 C1197.5 1291.0 1188.7 1291.0 1201.9 1291.0 C1215.1 1291.0 1206.3 1291.0 1219.5 1291.0 C1232.6 1291.0 1223.8 1084.3 1237.0 1084.3 C1250.2 1084.3 1241.4 1188.0 1254.5 1188.0 C1267.7 1188.0 1258.9 1191.5 1272.1 1191.5 C1285.3 1191.5 1276.5 1199.3 1289.6 1199.3 C1302.8 1199.3 1294.0 1204.5 1307.2 1204.5 C1320.4 1204.5 1311.6 1207.0 1324.7 1207.0 C1337.9 1207.0 1329.1 1207.0 1342.3 1207.0 C1355.4 1207.0 1346.7 1239.0 1359.8 1239.0 C1373.0 1239.0 1364.2 1239.0 1377.4 1239.0 C1390.5 1239.0 1381.8 1243.0 1394.9 1243.0 C1408.1 1243.0 1399.3 1243.0 1412.5 1243.0 C1425.6 1243.0 1416.9 1248.6 1430.0 1248.6 C1443.2 1248.6 1434.4 1254.0 1447.6 1254.0 C1460.7 1254.0 1452.0 1258.3 1465.1 1258.3 C1478.3 1258.3 1469.5 1239.0 1482.7 1239.0 C1495.8 1239.0 1487.1 1242.0 1500.2 1242.0 C1513.4 1242.0 1504.6 1255.5 1517.8 1255.5 C1530.9 1255.5 1522.2 1253.0 1535.3 1253.0 C1548.5 1253.0 1539.7 1253.0 1552.9 1253.0 C1566.0 1253.0 1557.3 1257.7 1570.4 1257.7 C1583.6 1257.7 1574.8 1257.7 1588.0 1257.7 C1601.1 1257.7 1592.3 1257.7 1605.5 1257.7 C1618.7 1257.7 1609.9 1259.3 1623.1 1259.3 C1636.2 1259.3 1627.4 1261.0 1640.6 1261.0 C1653.8 1261.0 1645.0 1261.5 1658.2 1261.5 C1671.3 1261.5 1662.5 1288.7 1675.7 1288.7 C1688.9 1288.7 1680.1 1291.0 1693.2 1291.0 C1706.4 1291.0 1697.6 1291.0 1710.8 1291.0 C1724.0 1291.0 1715.2 1291.0 1728.3 1291.0 C1741.5 1291.0 1732.7 1291.0 1745.9 1291.0 C1759.1 1291.0 1750.3 1291.0 1763.4 1291.0 C1776.6 1291.0 1767.8 1084.3 1781.0 1084.3 C1794.1 1084.3 1785.4 1188.0 1798.5 1188.0 C1811.7 1188.0 1802.9 1191.5 1816.1 1191.5 C1829.2 1191.5 1820.5 1199.3 1833.6 1199.3 C1846.8 1199.3 1838.0 1204.5 1851.2 1204.5 C1864.3 1204.5 1855.6 1207.0 1868.7 1207.0 C1881.9 1207.0 1873.1 1207.0 1886.3 1207.0 C1899.4 1207.0 1890.7 1239.0 1903.8 1239.0 C1917.0 1239.0 1908.2 1239.0 1921.4 1239.0 C1934.5 1239.0 1925.8 1243.0 1938.9 1243.0 C1952.1 1243.0 1943.3 1243.0 1956.5 1243.0 C1969.6 1243.0 1960.9 1248.6 1974.0 1248.6 C1987.2 1248.6 1978.4 1254.0 1991.6 1254.0 C2004.7 1254.0 1996.0 1258.3 2009.1 1258.3 C2022.3 1258.3 2013.5 1239.0 2026.7 1239.0 C2039.8 1239.0 2031.0 1242.0 2044.2 1242.0 C2057.4 1242.0 2048.6 1255.5 2061.8 1255.5 C2074.9 1255.5 2066.1 1253.0 2079.3 1253.0 C2092.5 1253.0 2083.7 1253.0 2096.9 1253.0 C2110.0 1253.0 2101.2 1257.7 2114.4 1257.7 C2127.6 1257.7 2118.8 1257.7 2131.9 1257.7 C2145.1 1257.7 2136.3 1257.7 2149.5 1257.7 C2162.7 1257.7 2153.9 1259.3 2167.0 1259.3 C2180.2 1259.3 2171.4 1261.0 2184.6 1261.0 C2197.8 1261.0 2189.0 1261.5 2202.1 1261.5 C2215.3 1261.5 2206.5 1288.7 2219.7 1288.7 C2232.8 1288.7 2224.1 1291.0 2237.2 1291.0 C2250.4 1291.0 2241.6 1291.0 2254.8 1291.0 C2267.9 1291.0 2259.2 1291.0 2272.3 1291.0 C2285.5 1291.0 2276.7 1291.0 2289.9 1291.0 C2303.0 1291.0 2294.3 1291.0 2307.4 1291.0 C2320.6 1291.0 2311.8 1084.3 2325.0 1084.3 C2338.1 1084.3 2329.4 1188.0 2342.5 1188.0 C2355.7 1188.0 2346.9 1191.5 2360.1 1191.5 C2373.2 1191.5 2364.5 1199.3 2377.6 1199.3 C2391.4 1199.3 2382.2 1199.3 2396.0 1199.3 L2396.0 1291 L815.8 1291 Z" fill="url(#gf)"/>
<path d="M815.8 1207.0 C829.0 1207.0 820.2 1239.0 833.4 1239.0 C846.6 1239.0 837.8 1239.0 850.9 1239.0 C864.1 1239.0 855.3 1243.0 868.5 1243.0 C881.7 1243.0 872.9 1243.0 886.0 1243.0 C899.2 1243.0 890.4 1248.6 903.6 1248.6 C916.7 1248.6 908.0 1254.0 921.1 1254.0 C934.3 1254.0 925.5 1258.3 938.7 1258.3 C951.8 1258.3 943.1 1239.0 956.2 1239.0 C969.4 1239.0 960.6 1242.0 973.8 1242.0 C986.9 1242.0 978.2 1255.5 991.3 1255.5 C1004.5 1255.5 995.7 1253.0 1008.9 1253.0 C1022.0 1253.0 1013.3 1253.0 1026.4 1253.0 C1039.6 1253.0 1030.8 1257.7 1044.0 1257.7 C1057.1 1257.7 1048.4 1257.7 1061.5 1257.7 C1074.7 1257.7 1065.9 1257.7 1079.1 1257.7 C1092.2 1257.7 1083.5 1259.3 1096.6 1259.3 C1109.8 1259.3 1101.0 1261.0 1114.2 1261.0 C1127.3 1261.0 1118.6 1261.5 1131.7 1261.5 C1144.9 1261.5 1136.1 1288.7 1149.3 1288.7 C1162.4 1288.7 1153.6 1291.0 1166.8 1291.0 C1180.0 1291.0 1171.2 1291.0 1184.4 1291.0 C1197.5 1291.0 1188.7 1291.0 1201.9 1291.0 C1215.1 1291.0 1206.3 1291.0 1219.5 1291.0 C1232.6 1291.0 1223.8 1084.3 1237.0 1084.3 C1250.2 1084.3 1241.4 1188.0 1254.5 1188.0 C1267.7 1188.0 1258.9 1191.5 1272.1 1191.5 C1285.3 1191.5 1276.5 1199.3 1289.6 1199.3 C1302.8 1199.3 1294.0 1204.5 1307.2 1204.5 C1320.4 1204.5 1311.6 1207.0 1324.7 1207.0 C1337.9 1207.0 1329.1 1207.0 1342.3 1207.0 C1355.4 1207.0 1346.7 1239.0 1359.8 1239.0 C1373.0 1239.0 1364.2 1239.0 1377.4 1239.0 C1390.5 1239.0 1381.8 1243.0 1394.9 1243.0 C1408.1 1243.0 1399.3 1243.0 1412.5 1243.0 C1425.6 1243.0 1416.9 1248.6 1430.0 1248.6 C1443.2 1248.6 1434.4 1254.0 1447.6 1254.0 C1460.7 1254.0 1452.0 1258.3 1465.1 1258.3 C1478.3 1258.3 1469.5 1239.0 1482.7 1239.0 C1495.8 1239.0 1487.1 1242.0 1500.2 1242.0 C1513.4 1242.0 1504.6 1255.5 1517.8 1255.5 C1530.9 1255.5 1522.2 1253.0 1535.3 1253.0 C1548.5 1253.0 1539.7 1253.0 1552.9 1253.0 C1566.0 1253.0 1557.3 1257.7 1570.4 1257.7 C1583.6 1257.7 1574.8 1257.7 1588.0 1257.7 C1601.1 1257.7 1592.3 1257.7 1605.5 1257.7 C1618.7 1257.7 1609.9 1259.3 1623.1 1259.3 C1636.2 1259.3 1627.4 1261.0 1640.6 1261.0 C1653.8 1261.0 1645.0 1261.5 1658.2 1261.5 C1671.3 1261.5 1662.5 1288.7 1675.7 1288.7 C1688.9 1288.7 1680.1 1291.0 1693.2 1291.0 C1706.4 1291.0 1697.6 1291.0 1710.8 1291.0 C1724.0 1291.0 1715.2 1291.0 1728.3 1291.0 C1741.5 1291.0 1732.7 1291.0 1745.9 1291.0 C1759.1 1291.0 1750.3 1291.0 1763.4 1291.0 C1776.6 1291.0 1767.8 1084.3 1781.0 1084.3 C1794.1 1084.3 1785.4 1188.0 1798.5 1188.0 C1811.7 1188.0 1802.9 1191.5 1816.1 1191.5 C1829.2 1191.5 1820.5 1199.3 1833.6 1199.3 C1846.8 1199.3 1838.0 1204.5 1851.2 1204.5 C1864.3 1204.5 1855.6 1207.0 1868.7 1207.0 C1881.9 1207.0 1873.1 1207.0 1886.3 1207.0 C1899.4 1207.0 1890.7 1239.0 1903.8 1239.0 C1917.0 1239.0 1908.2 1239.0 1921.4 1239.0 C1934.5 1239.0 1925.8 1243.0 1938.9 1243.0 C1952.1 1243.0 1943.3 1243.0 1956.5 1243.0 C1969.6 1243.0 1960.9 1248.6 1974.0 1248.6 C1987.2 1248.6 1978.4 1254.0 1991.6 1254.0 C2004.7 1254.0 1996.0 1258.3 2009.1 1258.3 C2022.3 1258.3 2013.5 1239.0 2026.7 1239.0 C2039.8 1239.0 2031.0 1242.0 2044.2 1242.0 C2057.4 1242.0 2048.6 1255.5 2061.8 1255.5 C2074.9 1255.5 2066.1 1253.0 2079.3 1253.0 C2092.5 1253.0 2083.7 1253.0 2096.9 1253.0 C2110.0 1253.0 2101.2 1257.7 2114.4 1257.7 C2127.6 1257.7 2118.8 1257.7 2131.9 1257.7 C2145.1 1257.7 2136.3 1257.7 2149.5 1257.7 C2162.7 1257.7 2153.9 1259.3 2167.0 1259.3 C2180.2 1259.3 2171.4 1261.0 2184.6 1261.0 C2197.8 1261.0 2189.0 1261.5 2202.1 1261.5 C2215.3 1261.5 2206.5 1288.7 2219.7 1288.7 C2232.8 1288.7 2224.1 1291.0 2237.2 1291.0 C2250.4 1291.0 2241.6 1291.0 2254.8 1291.0 C2267.9 1291.0 2259.2 1291.0 2272.3 1291.0 C2285.5 1291.0 2276.7 1291.0 2289.9 1291.0 C2303.0 1291.0 2294.3 1291.0 2307.4 1291.0 C2320.6 1291.0 2311.8 1084.3 2325.0 1084.3 C2338.1 1084.3 2329.4 1188.0 2342.5 1188.0 C2355.7 1188.0 2346.9 1191.5 2360.1 1191.5 C2373.2 1191.5 2364.5 1199.3 2377.6 1199.3 C2391.4 1199.3 2382.2 1199.3 2396.0 1199.3" fill="none" stroke="#5e9b48" stroke-width="4.7" stroke-linejoin="round" stroke-linecap="round"/>
<circle cx="2395" cy="1199.3" r="8" fill="#5e9b48"/></g></svg>
<div class="r" style="left:2429px;top:259px;width:64px;height:1105px;background:#6f8fae;"></div>
<svg class="s" style="left:2447px;top:294px;" width="28" height="28" viewBox="0 0 28 28"><path d="M3 3 L25 25 M25 3 L3 25" stroke="#fff" stroke-width="3.4" fill="none"/></svg>
<div class="t" style="left:2444px;top:356px;font-size:32px;line-height:32px;color:#fff;transform-origin:0 0;transform:translate(32px,0) rotate(90deg);">90 Tage</div>
<svg class="s" style="left:2449px;top:840px;" width="24" height="30" viewBox="0 0 24 30"><polyline points="18,3 7,14 18,25" fill="none" stroke="#fff" stroke-width="3.6"/></svg>
<div class="r" style="left:728px;top:1364px;width:1765px;height:2px;background:#cdd4da;"></div>
<div class="r" style="left:761px;top:1396px;width:158px;height:52px;box-sizing:border-box;border:1px solid #ededed;border-radius:8px;background:transparent;"></div>
<div class="t" style="left:240px;width:1200px;text-align:center;top:1408.36px;font-size:23.5px;line-height:31px;color:#c9cacc;">Neu</div>
<div class="r" style="left:937px;top:1396px;width:98px;height:52px;box-sizing:border-box;border:2px solid #e1e1e1;border-radius:8px;background:#ffffff;"></div>
<svg class="s" style="left:952px;top:1403.5px;" width="36" height="36" viewBox="0 0 36 36"><path d="M11 13 L11 6 L25 6 L25 13" fill="none" stroke="#777b80" stroke-width="3.2"/><path d="M9 27 L4.5 27 L4.5 15 Q4.5 13 6.5 13 L29.5 13 Q31.5 13 31.5 15 L31.5 27 L27 27" fill="none" stroke="#777b80" stroke-width="3.2"/><rect x="10.5" y="22" width="15" height="10" fill="none" stroke="#777b80" stroke-width="3.2"/><circle cx="26" cy="18" r="1.3" fill="#777b80"/></svg>
<svg class="s" style="left:1002px;top:1414px;" width="20" height="14" viewBox="0 0 20 14"><polyline points="3,11 10,4 17,11" fill="none" stroke="#777b80" stroke-width="3"/></svg>
<div class="r" style="left:1053px;top:1396px;width:46px;height:52px;box-sizing:border-box;border:2px solid #e1e1e1;border-radius:8px;background:#ffffff;"></div>
<svg class="s" style="left:1060px;top:1404px;" width="32" height="36" viewBox="0 0 32 36"><g transform="translate(16,18) scale(0.86) translate(-17,-19)"><path d="M7 13 A11 11 0 0 0 17 30" fill="none" stroke="#777b80" stroke-width="3.5"/>
<path d="M27 25 A11 11 0 0 0 17 8" fill="none" stroke="#777b80" stroke-width="3.5"/>
<path d="M17 1 L17 15 L9.5 8 Z" fill="#777b80"/><path d="M17 37 L17 23 L24.5 30 Z" fill="#777b80"/></g></svg>
<div class="r" style="left:1117px;top:1396px;width:46px;height:52px;box-sizing:border-box;border:2px solid #e1e1e1;border-radius:8px;background:#ffffff;"></div>
<svg class="s" style="left:1121px;top:1410px;" width="40" height="26" viewBox="0 0 40 26"><path d="M2.5 13 L10.5 21 M10.5 12.5 L17.5 19.5 L35.5 2.5 M17.5 11.5 L26.5 3" fill="none" stroke="#777b80" stroke-width="2.9"/></svg>
<div class="r" style="left:1181px;top:1396px;width:94px;height:52px;box-sizing:border-box;border:2px solid #e1e1e1;border-radius:8px;background:#ffffff;"></div>
<svg class="s" style="left:1198px;top:1404px;" width="36" height="36" viewBox="0 0 36 36"><rect x="5.5" y="2.5" width="6" height="6" fill="none" stroke="#777b80" stroke-width="2.6"/><path d="M8.5 9 L8.5 30 L16 30 M8.5 20 L16 20" fill="none" stroke="#777b80" stroke-width="3"/><circle cx="22" cy="19.5" r="3.6" fill="none" stroke="#777b80" stroke-width="2.6"/><circle cx="22" cy="30" r="3.6" fill="none" stroke="#777b80" stroke-width="2.6"/></svg>
<svg class="s" style="left:1242px;top:1414px;" width="20" height="14" viewBox="0 0 20 14"><polyline points="3,11 10,4 17,11" fill="none" stroke="#777b80" stroke-width="3"/></svg>
<div class="r" style="left:1293px;top:1396px;width:398px;height:52px;box-sizing:border-box;border:2px solid #e1e1e1;border-radius:8px;background:#ffffff;"></div>
<svg class="s" style="left:1651px;top:1406px;" width="34" height="34" viewBox="0 0 34 34"><circle cx="12.5" cy="12.5" r="8.5" fill="none" stroke="#777b80" stroke-width="3.8"/><path d="M18.5 18.5 L28 28" stroke="#777b80" stroke-width="4.4"/></svg>
<div class="r" style="left:1709px;top:1396px;width:398px;height:52px;box-sizing:border-box;border:2px solid #e1e1e1;border-radius:8px;background:#ffffff;"></div>
<div class="t" style="left:1724px;top:1409.36px;font-size:23.5px;line-height:31px;color:#33373b;">90 Tage</div>
<svg class="s" style="left:2074px;top:1414px;" width="20" height="14" viewBox="0 0 20 14"><polyline points="3,11 10,4 17,11" fill="none" stroke="#777b80" stroke-width="3"/></svg>
<div class="r" style="left:2237px;top:1396px;width:48px;height:52px;box-sizing:border-box;border:2px solid #3c78b4;border-radius:8px;background:#cfe0f2;"></div>
<svg class="s" style="left:2241px;top:1401px;" width="40" height="42" viewBox="0 0 40 42"><path d="M6.3 13.4 L33.8 13.4 M11.1 20.8 L29 20.8 M16.9 28.5 L23.2 28.5" stroke="#777b80" stroke-width="2.9"/></svg>
<div class="r" style="left:2301px;top:1396px;width:48px;height:52px;box-sizing:border-box;border:2px solid #3c78b4;border-radius:8px;background:#cfe0f2;"></div>
<svg class="s" style="left:2305px;top:1401px;" width="40" height="42" viewBox="0 0 40 42"><polyline points="6.3,26 16.9,14.8 23,21.5 33.8,11" fill="none" stroke="#777b80" stroke-width="2.9"/><path d="M4.9 32.3 L35.2 32.3" stroke="#777b80" stroke-width="2.4" stroke-dasharray="2.3 2.1"/></svg>
<div class="r" style="left:2366px;top:1396px;width:94px;height:52px;box-sizing:border-box;border:2px solid #e1e1e1;border-radius:8px;background:#ffffff;"></div>
<svg class="s" style="left:2380px;top:1404px;" width="38" height="36" viewBox="0 0 38 36"><rect x="7" y="5.9" width="23.8" height="23.7" rx="2" fill="none" stroke="#777b80" stroke-width="3.2"/><circle cx="13" cy="11.8" r="1.5" fill="#777b80"/><circle cx="13" cy="17.8" r="1.5" fill="#777b80"/><circle cx="13" cy="23.7" r="1.5" fill="#777b80"/><path d="M17.5 11.8 L26.6 11.8 M17.5 17.8 L26.6 17.8 M17.5 23.7 L26.6 23.7" stroke="#777b80" stroke-width="2.6"/></svg>
<svg class="s" style="left:2428px;top:1414px;" width="20" height="14" viewBox="0 0 20 14"><polyline points="3,11 10,4 17,11" fill="none" stroke="#777b80" stroke-width="3"/></svg>
</body></html>
